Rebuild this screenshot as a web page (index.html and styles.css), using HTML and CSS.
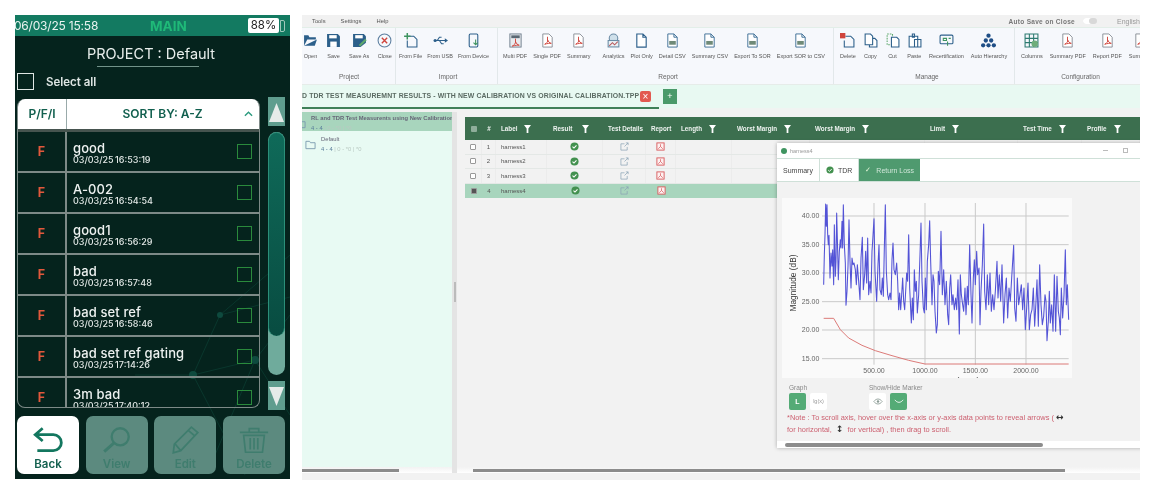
FILE: index.html
```html
<!DOCTYPE html>
<html lang="en">
<head>
    <meta charset="UTF-8">
    <title>Project results</title>
    <link rel="stylesheet" href="styles.css">
</head>
<body>
    <svg class="sprites" width="0" height="0">
        <symbol id="doc" viewBox="0 0 14 16"><path d="M2 1h6.500L12 4.500V15H2z M8.500 1v3.500H12" fill="#fff" stroke="#2c5f8a" stroke-width="1.200"/></symbol>
        <symbol id="pdf" viewBox="0 0 14 16"><path d="M2 1h6.500L12 4.500V15H2z" fill="#fff" stroke="#8a8f98"/><path d="M7 4v4M4 12c2-1 4-3 3-5 1 2 2 4 4 4-2 0-4 0-7 1z" fill="none" stroke="#d0443c"/></symbol>
        <symbol id="multi" viewBox="0 0 14 16"><rect x="1" y="1" width="12" height="14" fill="#e8ebef" stroke="#6f7f8e"/><rect x="2.500" y="2.500" width="9" height="3" fill="#5a6874"/><path d="M7 6v4M3.500 14c2-1 4-3 3.500-5 1 2 2 4 4 4-2 0-4 0-7.500 1z" fill="none" stroke="#d0443c"/></symbol>
        <symbol id="sheet" viewBox="0 0 14 16"><path d="M2 1h6.500L12 4.500V15H2z M8.500 1v3.500H12" fill="#fff" stroke="#3e6f96"/><rect x="3.500" y="8.500" width="7" height="4" fill="#6f8a78"/></symbol>
        <symbol id="filter" viewBox="0 0 8 9"><path d="M0 0h8L5 4v5H3V4z" fill="#fff"/></symbol>
        <symbol id="okay" viewBox="0 0 10 10"><circle cx="5" cy="5" r="4.500" fill="#43914f"/><path d="M2.800 5.200l1.600 1.500 2.800-3" fill="none" stroke="#fff" stroke-width="1.200"/></symbol>
        <symbol id="details" viewBox="0 0 10 10"><path d="M8 5.500V9H1V2h4M5 5l4-4M6.500 1H9v2.500" fill="none" stroke="#8aa3b5" stroke-width=".8"/></symbol>
        <symbol id="report" viewBox="0 0 10 10"><rect x="1" y="1" width="8" height="8" fill="#fdf0f0" stroke="#d8575a"/><path d="M5 2.500V5M2.500 7.500L5 5l2.500 2.500" fill="none" stroke="#d8575a" stroke-width=".8"/></symbol>
        <symbol id="folder" viewBox="0 0 12 10"><path d="M1 9V1h4l1 1.500h5V9z" fill="none" stroke="#7c9bb0"/></symbol>
    </svg>

    <!-- handheld tester -->
    <div class="phone">
        <svg class="phone-net" viewBox="0 0 275 464">
            <path d="M275 282L205 300 178 360 240 345 275 300M205 300L275 240M178 360L230 460M240 345L200 440M120 360L178 360M240 345L275 400" fill="none" stroke="#0c3f34" stroke-width=".7"/>
            <circle cx="205" cy="300" r="3" fill="#0e4a3e"/>
            <circle cx="178" cy="360" r="4" fill="#0e4a3e"/>
            <circle cx="240" cy="345" r="4" fill="#0e4a3e"/>
            <circle cx="263" cy="270" r="3" fill="#0e4a3e"/>
        </svg>
        <div class="status-bar">
            <span class="status-time">06/03/25 15:58</span>
            <span class="status-mode">MAIN</span>
            <span class="battery">88%</span>
            <span class="battery-nub"></span>
        </div>
        <h1 class="project-title">PROJECT : Default</h1>
        <div class="project-rule"></div>
        <label class="select-all"><span class="select-box"></span>Select all</label>

        <div class="list-area">
            <div class="list">
                <div class="list-head">
                    <div class="head-pfi">P/F/I</div>
                    <div class="head-sort">SORT BY: A-Z
                        <svg class="sort-caret" viewBox="0 0 10 6"><path d="M1 5l4-4 4 4" fill="none" stroke="#2a9a7e" stroke-width="1.500"/></svg>
                    </div>
                </div>
                <div class="list-row"><div class="row-flag">F</div><div class="row-main"><div class="row-name">good</div><div class="row-date">03/03/25 16:53:19</div></div><span class="row-check"></span></div>
                <div class="list-row"><div class="row-flag">F</div><div class="row-main"><div class="row-name">A-002</div><div class="row-date">03/03/25 16:54:54</div></div><span class="row-check"></span></div>
                <div class="list-row"><div class="row-flag">F</div><div class="row-main"><div class="row-name">good1</div><div class="row-date">03/03/25 16:56:29</div></div><span class="row-check"></span></div>
                <div class="list-row"><div class="row-flag">F</div><div class="row-main"><div class="row-name">bad</div><div class="row-date">03/03/25 16:57:48</div></div><span class="row-check"></span></div>
                <div class="list-row"><div class="row-flag">F</div><div class="row-main"><div class="row-name">bad set ref</div><div class="row-date">03/03/25 16:58:46</div></div><span class="row-check"></span></div>
                <div class="list-row"><div class="row-flag">F</div><div class="row-main"><div class="row-name">bad set ref gating</div><div class="row-date">03/03/25 17:14:26</div></div><span class="row-check"></span></div>
                <div class="list-row"><div class="row-flag">F</div><div class="row-main"><div class="row-name">3m bad</div><div class="row-date">03/03/25 17:40:12</div></div><span class="row-check"></span></div>
            </div>
            <div class="scroller">
                <div class="scroll-btn"><svg viewBox="0 0 17 24"><path d="M8.500 3L16 22H1z" fill="#e6ebe9"/></svg></div>
                <div class="scroll-track"><div class="scroll-thumb"></div></div>
                <div class="scroll-btn"><svg viewBox="0 0 17 24"><path d="M8.500 22L16 3H1z" fill="#e6ebe9"/></svg></div>
            </div>
        </div>

        <div class="actions">
            <div class="action action-on">
                <svg viewBox="0 0 30 26"><path d="M10 2L3 8l7 6M3 8h17a6.500 6.500 0 0 1 0 15H5" fill="none" stroke="#13775f" stroke-width="2.600"/></svg>
                <span>Back</span>
            </div>
            <div class="action">
                <svg viewBox="0 0 30 26"><circle cx="18" cy="10" r="8" fill="none" stroke="#3f7d6e" stroke-width="2.200"/><path d="M12 16L3 24" stroke="#3f7d6e" stroke-width="2.800"/></svg>
                <span>View</span>
            </div>
            <div class="action">
                <svg viewBox="0 0 30 26"><path d="M21 1l6 5L11 23l-7 2 1-8zM6 17l5 6M18 4l6 5" fill="none" stroke="#3f7d6e" stroke-width="1.600"/></svg>
                <span>Edit</span>
            </div>
            <div class="action">
                <svg viewBox="0 0 34 28"><path d="M2 6h30M12 6V2h10v4M6 9h22l-2 18H8zM13 12v12M17 12v12M21 12v12" fill="none" stroke="#3f7d6e" stroke-width="1.800"/></svg>
                <span>Delete</span>
            </div>
        </div>
    </div>

    <!-- desktop application -->
    <div class="desktop">
        <div class="menu-bar">
            <span class="menu-item">Tools</span>
            <span class="menu-item">Settings</span>
            <span class="menu-item">Help</span>
            <span class="autosave">Auto Save on Close</span>
            <span class="toggle"></span>
            <span class="language">English</span>
        </div>

        <div class="ribbon">
            <div class="rib-group rib-project">
                <div class="rib-tools">
                    <div class="tool"><svg viewBox="0 0 14 14"><path d="M1 12V2h4l1 2h6v2H4l-3 6h10l2-6" fill="#2c5f8a"/></svg><span>Open</span></div>
                    <div class="tool"><svg viewBox="0 0 14 14"><path d="M1 1h10l2 2v10H1z" fill="#2c5f8a"/><rect x="3" y="2" width="7" height="3" fill="#fff"/><rect x="4" y="8" width="6" height="5" fill="#fff"/></svg><span>Save</span></div>
                    <div class="tool"><svg viewBox="0 0 14 14"><path d="M1 1h10l2 2v6l-5 4H1z" fill="#2c5f8a"/><rect x="3" y="2" width="7" height="3" fill="#fff"/><path d="M7 12l6-6" stroke="#5ea86c" stroke-width="2"/></svg><span>Save As</span></div>
                    <div class="tool"><svg viewBox="0 0 14 14"><circle cx="7" cy="7" r="6" fill="none" stroke="#5d7fa0"/><path d="M4.500 4.500l5 5M9.500 4.500l-5 5" stroke="#d0443c" stroke-width="1.300"/></svg><span>Close</span></div>
                </div>
                <div class="rib-title">Project</div>
            </div>
            <div class="rib-group rib-import">
                <div class="rib-tools">
                    <div class="tool"><svg viewBox="0 0 14 14"><path d="M5 3h5l3 3v7H4V7" fill="none" stroke="#2c5f8a"/><path d="M4 0v6M1 3h6" stroke="#3f9460" stroke-width="1.400"/></svg><span>From File</span></div>
                    <div class="tool"><svg viewBox="0 0 14 14"><path d="M1 7h11M4 7l2-3h2M6 7l2 3h2" fill="none" stroke="#2c5f8a"/><circle cx="2" cy="7" r="1.500" fill="#2c5f8a"/><path d="M11 5l3 2-3 2z" fill="#2c5f8a"/></svg><span>From USB</span></div>
                    <div class="tool"><svg viewBox="0 0 14 14"><rect x="3" y="1" width="8" height="12" rx="1" fill="none" stroke="#2c5f8a"/><path d="M9 6v5M7 9l2 2 2-2" fill="none" stroke="#3f9460"/></svg><span>From Device</span></div>
                </div>
                <div class="rib-title">Import</div>
            </div>
            <div class="rib-group rib-report">
                <div class="rib-tools">
                    <div class="tool"><svg><use href="#multi"/></svg><span>Multi PDF</span></div>
                    <div class="tool"><svg><use href="#pdf"/></svg><span>Single PDF</span></div>
                    <div class="tool tool-wide"><svg><use href="#pdf"/></svg><span>Summary</span></div>
                    <div class="tool"><svg viewBox="0 0 14 14"><circle cx="7" cy="5" r="4" fill="#cfe0ea" stroke="#6a8ba5"/><rect x="2" y="7" width="10" height="6" fill="#e9f1f5" stroke="#6a8ba5"/><path d="M3 12l3-3 2 2 3-3" fill="none" stroke="#b8595c"/></svg><span>Analytics</span></div>
                    <div class="tool"><svg><use href="#doc"/></svg><span>Plot Only</span></div>
                    <div class="tool"><svg><use href="#sheet"/></svg><span>Detail CSV</span></div>
                    <div class="tool"><svg><use href="#sheet"/></svg><span>Summary CSV</span></div>
                    <div class="tool"><svg><use href="#sheet"/></svg><span>Export To SOR</span></div>
                    <div class="tool"><svg><use href="#sheet"/></svg><span>Export SOR to CSV</span></div>
                </div>
                <div class="rib-title">Report</div>
            </div>
            <div class="rib-group rib-manage">
                <div class="rib-tools">
                    <div class="tool"><svg viewBox="0 0 14 14"><path d="M5 3h5l3 3v7H4V7" fill="none" stroke="#2c5f8a"/><rect x="0" y="0" width="5" height="5" fill="#d0443c"/></svg><span>Delete</span></div>
                    <div class="tool"><svg viewBox="0 0 14 14"><path d="M2 1h5l2 2v8H2z M9 5h2l2 2v6H6v-2" fill="#fff" stroke="#2c5f8a"/></svg><span>Copy</span></div>
                    <div class="tool"><svg viewBox="0 0 14 14"><path d="M2 1h5v10H2z" fill="none" stroke="#5ea86c" stroke-dasharray="1.500 1"/><path d="M6 4h5l2 2v7H6z" fill="#fff" stroke="#2c5f8a"/></svg><span>Cut</span></div>
                    <div class="tool"><svg viewBox="0 0 14 14"><path d="M2 3h8v10H2z M5 1h2v3H5z M7 6h6v7H7z" fill="#fff" stroke="#2c5f8a"/></svg><span>Paste</span></div>
                    <div class="tool"><svg viewBox="0 0 14 14"><rect x="1" y="2" width="12" height="8" rx="1" fill="none" stroke="#2c5f8a"/><path d="M4 5h3v2H4zM9 5h2M8 8v4" fill="none" stroke="#3f9460"/></svg><span>Recertification</span></div>
                    <div class="tool"><svg viewBox="0 0 14 14" fill="#1f4e86"><circle cx="7" cy="2.500" r="2"/><circle cx="4.500" cy="7" r="2"/><circle cx="9.500" cy="7" r="2"/><circle cx="2" cy="11.500" r="2"/><circle cx="7" cy="11.500" r="2"/><circle cx="12" cy="11.500" r="2"/></svg><span>Auto Hierarchy</span></div>
                </div>
                <div class="rib-title">Manage</div>
            </div>
            <div class="rib-group rib-config">
                <div class="rib-tools">
                    <div class="tool"><svg viewBox="0 0 14 14"><path d="M1 1h12v12H1zM1 5h12M1 9h12M5 1v12M9 1v12" fill="none" stroke="#2c7a70"/><circle cx="10" cy="10" r="3" fill="#6fae7b"/></svg><span>Columns</span></div>
                    <div class="tool"><svg><use href="#pdf"/></svg><span>Summary PDF</span></div>
                    <div class="tool"><svg><use href="#pdf"/></svg><span>Report PDF</span></div>
                    <div class="tool"><svg><use href="#pdf"/></svg><span>Summary</span></div>
                </div>
                <div class="rib-title">Configuration</div>
            </div>
        </div>

        <div class="file-tabs">
            <div class="file-tab">D TDR TEST MEASUREMNT RESULTS - WITH NEW CALIBRATION VS ORIGINAL CALIBRATION.TPP</div>
            <span class="tab-close">×</span>
            <span class="tab-add">+</span>
        </div>

        <div class="workspace">
            <div class="tree-pane">
                <div class="tree">
                    <div class="tree-item tree-item-on">
                        <svg><use href="#folder"/></svg>
                        <div class="tree-text">
                            <div class="tree-name">RL and TDR Test Measurents using New Calibration</div>
                            <div class="tree-count">4 - 4 <i>| 0 - *0 | *0</i></div>
                        </div>
                    </div>
                    <div class="tree-item">
                        <svg><use href="#folder"/></svg>
                        <div class="tree-text">
                            <div class="tree-name">Default</div>
                            <div class="tree-count">4 - 4 <i>| 0 - *0 | *0</i></div>
                        </div>
                    </div>
                </div>
                <div class="hscroll"><div class="hscroll-thumb tree-thumb"></div></div>
            </div>
            <div class="splitter"><span></span></div>
            <div class="results">
                <div class="table">
                    <div class="table-head">
                        <div class="cell cell-mid"><b class="minus-box"></b></div>
                        <div class="cell cell-mid">#</div>
                        <div class="cell">Label <svg><use href="#filter"/></svg></div>
                        <div class="cell cell-result">Result <svg><use href="#filter"/></svg></div>
                        <div class="cell">Test Details</div>
                        <div class="cell">Report</div>
                        <div class="cell">Length <svg><use href="#filter"/></svg></div>
                        <div class="cell">Worst Margin <svg><use href="#filter"/></svg></div>
                        <div class="cell">Worst Margin <svg><use href="#filter"/></svg></div>
                        <div class="cell">Limit <svg><use href="#filter"/></svg></div>
                        <div class="cell">Test Time <svg><use href="#filter"/></svg></div>
                        <div class="cell">Profile <svg><use href="#filter"/></svg></div>
                    </div>
                    <div class="table-row">
                        <div class="cell cell-mid"><b class="tick-box"></b></div><div class="cell cell-mid">1</div><div class="cell">harness1</div>
                        <div class="cell cell-mid"><svg class="row-icon"><use href="#okay"/></svg></div><div class="cell cell-mid"><svg class="row-icon"><use href="#details"/></svg></div><div class="cell cell-mid"><svg class="row-icon"><use href="#report"/></svg></div>
                        <div class="cell"></div><div class="cell"></div><div class="cell"></div><div class="cell"></div><div class="cell"></div><div class="cell"></div>
                    </div>
                    <div class="table-row">
                        <div class="cell cell-mid"><b class="tick-box"></b></div><div class="cell cell-mid">2</div><div class="cell">harness2</div>
                        <div class="cell cell-mid"><svg class="row-icon"><use href="#okay"/></svg></div><div class="cell cell-mid"><svg class="row-icon"><use href="#details"/></svg></div><div class="cell cell-mid"><svg class="row-icon"><use href="#report"/></svg></div>
                        <div class="cell"></div><div class="cell"></div><div class="cell"></div><div class="cell"></div><div class="cell"></div><div class="cell"></div>
                    </div>
                    <div class="table-row">
                        <div class="cell cell-mid"><b class="tick-box"></b></div><div class="cell cell-mid">3</div><div class="cell">harness3</div>
                        <div class="cell cell-mid"><svg class="row-icon"><use href="#okay"/></svg></div><div class="cell cell-mid"><svg class="row-icon"><use href="#details"/></svg></div><div class="cell cell-mid"><svg class="row-icon"><use href="#report"/></svg></div>
                        <div class="cell"></div><div class="cell"></div><div class="cell"></div><div class="cell"></div><div class="cell"></div><div class="cell"></div>
                    </div>
                    <div class="table-row table-row-on">
                        <div class="cell cell-mid"><b class="tick-box tick-box-on"></b></div><div class="cell cell-mid">4</div><div class="cell">harness4</div>
                        <div class="cell cell-mid"><svg class="row-icon"><use href="#okay"/></svg></div><div class="cell cell-mid"><svg class="row-icon"><use href="#details"/></svg></div><div class="cell cell-mid"><svg class="row-icon"><use href="#report"/></svg></div>
                        <div class="cell"></div><div class="cell"></div><div class="cell"></div><div class="cell"></div><div class="cell"></div><div class="cell"></div>
                    </div>
                </div>
                <div class="results-space"></div>
                <div class="hscroll"><div class="hscroll-thumb results-thumb"></div></div>
            </div>
        </div>
        <div class="bottom-strip"></div>

        <!-- harness window, floats over the table -->
        <div class="harness-win">
            <div class="win-title">
                <span class="win-dot"></span>
                <span class="win-name">harness4</span>
                <span class="win-min"></span>
                <span class="win-max"></span>
            </div>
            <div class="win-tabs">
                <div class="win-tab">Summary</div>
                <div class="win-tab"><svg><use href="#okay"/></svg>TDR</div>
                <div class="win-tab win-tab-on">✓ <em>Return Loss</em></div>
            </div>
            <div class="win-body">
                <svg class="chart" viewBox="20 10 870 540">
                    <g class="grid">
                        <path d="M140 64H880M140 150H880M140 235H880M140 321H880M140 406H880M140 492H880"/>
                        <path d="M296 25V510M449 25V510M600 25V510M752 25V510"/>
                    </g>
                    <g class="y-ticks">
                        <text x="132" y="71">40.00</text>
                        <text x="132" y="157">35.00</text>
                        <text x="132" y="242">30.00</text>
                        <text x="132" y="328">25.00</text>
                        <text x="132" y="413">20.00</text>
                        <text x="132" y="499">15.00</text>
                    </g>
                    <g class="x-ticks">
                        <text x="296" y="535">500.00</text>
                        <text x="449" y="535">1000.00</text>
                        <text x="600" y="535">1500.00</text>
                        <text x="752" y="535">2000.00</text>
                        <text class="axis-title" x="515" y="568">Frequency (MHz)</text>
                    </g>
                    <text class="axis-title" transform="translate(62 265) rotate(-90)">Magnitude (dB)</text>
                    <polyline class="trace" points="145,270 147,180 149,120 151,28 153,95 155,30 157,118 159,150 161,122 164,250 167,175 170,215 172,165 175,270 177,90 180,245 182,200 184,55 186,130 189,255 192,170 195,135 197,160 200,80 202,160 204,30 207,150 210,205 212,332 215,290 218,215 221,75 224,200 227,280 230,190 233,210 236,205 240,225 243,270 246,210 250,260 254,315 257,190 261,128 264,285 268,240 271,170 274,265 277,130 280,300 284,260 287,295 290,170 292,140 296,72 299,230 304,320 308,210 311,150 314,285 318,300 321,250 324,305 327,160 330,30 333,230 337,300 340,315 344,295 347,315 350,195 353,145 356,225 360,240 364,205 367,260 370,345 373,295 376,345 379,300 382,250 385,320 388,345 391,290 394,235 397,260 400,120 403,280 408,385 411,310 414,375 417,225 420,290 423,260 426,355 430,300 434,180 437,85 440,260 444,340 447,355 450,250 453,345 456,200 460,150 463,78 466,200 470,330 473,240 476,260 479,350 483,415 486,390 489,230 493,270 497,110 501,300 505,225 509,330 513,260 517,360 520,390 523,280 526,240 530,330 533,300 537,345 541,310 544,345 548,255 552,418 555,240 558,300 562,330 565,350 569,280 572,360 576,275 579,330 583,150 587,300 590,385 594,250 597,195 600,270 604,170 607,240 611,220 614,390 617,290 621,210 625,88 628,290 632,345 636,240 640,330 644,235 648,350 652,300 656,345 660,290 665,200 668,310 672,240 676,320 680,210 685,385 689,300 693,250 697,370 701,280 705,320 709,250 715,152 718,340 722,380 726,250 730,330 734,300 738,270 742,345 746,280 750,405 754,340 758,265 762,405 766,360 770,345 774,280 778,395 782,320 785,255 789,395 793,210 797,330 801,390 805,365 809,300 812,320 815,438 819,380 822,290 825,385 829,330 833,410 837,240 841,410 845,245 849,350 852,370 855,420 858,280 862,370 866,300 870,165 873,330 876,270 880,375"/>
                    <polyline class="limit" points="145,371 175,371 195,405 220,430 260,452 300,468 350,483 400,497 449,508 880,508"/>
                </svg>
                <div class="chart-controls">
                    <div class="control-group">
                        <div class="control-label">Graph</div>
                        <div class="control-btns"><span class="ctl ctl-on">L</span><span class="ctl">lg(x)</span></div>
                    </div>
                    <div class="control-group">
                        <div class="control-label">Show/Hide Marker</div>
                        <div class="control-btns">
                            <span class="ctl"><svg viewBox="0 0 12 8"><path d="M1 4c3-4 7-4 10 0-3 4-7 4-10 0z" fill="none" stroke="#8a9a94"/><circle cx="6" cy="4" r="1.500" fill="#8a9a94"/></svg></span>
                            <span class="ctl ctl-on"><svg viewBox="0 0 12 8"><path d="M1 2c3 4 7 4 10 0" fill="none" stroke="#fff"/></svg></span>
                        </div>
                    </div>
                </div>
                <p class="chart-note">*Note : To scroll axis, hover over the x-axis or y-axis data points to reveal arrows ( <b>↔</b><br>for horizontal, &nbsp;<b>↕</b>&nbsp; for vertical) , then drag to scroll.</p>
            </div>
            <div class="win-scroll"><div class="win-scroll-thumb"></div></div>
        </div>
    </div>
</body>
</html>
```

FILE: styles.css
```css
* {
    box-sizing: border-box;
}

body {
    margin: 0;
    padding: 15px;
    height: 497px;
    overflow: hidden;
    display: flex;
    gap: 12px;
    background: white;
    font-family: "Liberation Sans", sans-serif;
}

.sprites {
    display: none;
}

/* handheld */
.phone {
    position: relative;
    flex: none;
    width: 275px;
    height: 464px;
    display: flex;
    flex-direction: column;
    padding: 0 5px 0 2px;
    background: #05231d;
    color: white;
    font-family: Inter, sans-serif;
    overflow: hidden;
    filter: blur(.3px);
}

.phone-net {
    position: absolute;
    left: 0;
    top: 0;
    width: 275px;
    height: 464px;
}

.phone > div,
.phone > h1,
.phone > label {
    position: relative;
}

.status-bar {
    height: 21px;
    margin: 0 -5px 0 -2px;
    display: flex;
    align-items: center;
    background: #137a61;
    font-size: 12px;
    color: #e9f3f0;
}

.status-time {
    width: 112px;
    white-space: nowrap;
    margin-left: -1px;
    letter-spacing: -.2px;
}

.status-mode {
    width: 122px;
    padding-left: 24px;
    font-weight: 700;
    font-size: 13.500px;
    color: #1fb978;
}

.battery {
    width: 31px;
    height: 15px;
    background: white;
    border-radius: 2px;
    color: #222;
    font-size: 11.500px;
    line-height: 15px;
    text-align: center;
}

.battery-nub {
    width: 5px;
    height: 12px;
    margin-left: 1px;
    border: 1px solid #9fc9bc;
    border-radius: 0 2px 2px 0;
}

.project-title {
    margin: 8px 0 0;
    font-size: 14.500px;
    line-height: 20px;
    font-weight: 400;
    text-align: center;
    color: #e8eeec;
}

.project-rule {
    width: 102px;
    height: 1px;
    margin: 2px auto 0;
    transform: translateX(-3px);
    background: #72938a;
}

.select-all {
    display: flex;
    align-items: center;
    gap: 12px;
    margin-top: 6px;
    height: 17px;
    font-size: 11.500px;
    font-weight: 600;
    color: #dfe6e4;
}

.select-box {
    width: 17px;
    height: 17px;
    border: 1px solid #dfe6e4;
}

.list-area {
    display: flex;
    gap: 8px;
    height: 313px;
    margin-top: 7px;
}

.list {
    width: 243px;
    height: 309px;
    margin-top: 2px;
    border: 1px solid #7d8a87;
    border-top: none;
    border-radius: 8px;
    overflow: hidden;
}

.list-head {
    display: flex;
    height: 33px;
    background: white;
    color: #12604f;
    font-size: 12px;
    font-weight: 600;
    border-bottom: 3px solid #46544f;
}

.head-pfi {
    width: 49px;
    line-height: 29px;
    text-align: center;
    border-right: 1px solid #9aa;
}

.head-sort {
    position: relative;
    flex: 1;
    line-height: 29px;
    text-align: center;
    padding-right: 1px;
}

.sort-caret {
    position: absolute;
    right: 6px;
    top: 12px;
    width: 9px;
    height: 6px;
}

.list-row {
    display: flex;
    align-items: center;
    height: 41px;
    border-bottom: 2px solid #7d8a87;
    flex: none;
}

.row-flag {
    width: 49px;
    height: 41px;
    margin-bottom: -2px;
    line-height: 39px;
    text-align: center;
    color: #e2583c;
    font-size: 12.500px;
    font-weight: 700;
    border-right: 2px solid #7d8a87;
}

.row-main {
    flex: 1;
    padding: 2px 0 0 6px;
}

.row-name {
    font-size: 13px;
    line-height: 13px;
    font-weight: 500;
    letter-spacing: .1px;
    color: #eef2f1;
}

.row-date {
    font-size: 9px;
    line-height: 9px;
    font-weight: 500;
    color: #e2e8e6;
    word-spacing: -1px;
}

.row-check {
    width: 15px;
    height: 15px;
    margin-right: 7px;
    border: 1px solid #2a8a3c;
}

.scroller {
    width: 17px;
    display: flex;
    flex-direction: column;
    gap: 6px;
}

.scroll-btn {
    height: 29px;
    background: #5f9d8e;
    display: flex;
    align-items: center;
}

.scroll-btn svg {
    width: 17px;
    height: 24px;
}

.scroll-track {
    flex: 1;
    border-radius: 9px;
    background: #6fab9c;
    overflow: hidden;
}

.scroll-thumb {
    height: 204px;
    border-radius: 9px;
    border: 1px solid #2b8f79;
    border-bottom: none;
    background: linear-gradient(180deg, #0f6a59, #084c41);
}

.actions {
    display: flex;
    justify-content: space-between;
    margin-top: 6px;
}

.action {
    width: 62px;
    height: 58px;
    border-radius: 7px;
    background: #5c8a7f;
    color: #3f7d6e;
    display: flex;
    flex-direction: column;
    align-items: center;
    font-size: 11.500px;
    font-weight: 600;
}

.action svg {
    width: 32px;
    height: 28px;
    margin-top: 10px;
    margin-bottom: 3px;
}

.action-on {
    background: white;
    color: #13604f;
}

/* desktop application */
.desktop {
    position: relative;
    flex: none;
    width: 838px;
    height: 465px;
    display: flex;
    flex-direction: column;
    background: #f2f2f2;
    overflow: hidden;
    color: #555;
    filter: blur(.35px);
}

.menu-bar {
    display: flex;
    align-items: center;
    height: 13px;
    padding-left: 10px;
    font-size: 5.800px;
    background: #f1f1f1;
    border-bottom: 1px solid #e2eee8;
}

.menu-item {
    margin-right: 15px;
}

.autosave {
    margin-left: auto;
    font-size: 6.500px;
    font-weight: 700;
    letter-spacing: .3px;
    color: #777;
}

.toggle {
    width: 14px;
    height: 6px;
    margin: 0 20px 0 8px;
    border-radius: 3px;
    background: #d8d8d8;
    box-shadow: inset 6px 0 0 white;
}

.language {
    width: 23px;
    font-size: 7px;
    color: #999;
    white-space: nowrap;
}

.ribbon {
    display: flex;
    height: 57px;
    background: #f6f8fc;
    border-bottom: 1px solid #e6ece9;
}

.rib-group {
    flex: none;
    display: flex;
    flex-direction: column;
    border-right: 1px solid #e2e8ea;
    overflow: hidden;
}

.rib-project { width: 94px; padding-left: 1px; }
.rib-import { width: 102px; padding-left: 3px; }
.rib-report { width: 336px; padding-left: 5px; }
.rib-manage { width: 181px; padding-left: 6px; }
.rib-config { width: 125px; padding-left: 6px; border-right: none; }

.rib-tools {
    flex: 1;
    display: flex;
    gap: 6px;
    padding-top: 5px;
}

.rib-project .rib-tools { gap: 8px; }
.rib-import .rib-tools { gap: 5px; }
.rib-manage .rib-tools,
.rib-config .rib-tools { gap: 7px; }

.tool {
    flex: none;
    display: flex;
    flex-direction: column;
    align-items: center;
    gap: 4px;
    font-size: 5.500px;
    line-height: 8px;
    white-space: nowrap;
}

.tool svg {
    width: 15px;
    height: 15px;
}

.tool-wide {
    margin-right: 6px;
}

.rib-title {
    height: 15px;
    line-height: 15px;
    text-align: center;
    font-size: 6.500px;
    color: #666;
}

.file-tabs {
    display: flex;
    align-items: center;
    height: 25px;
    background: #e8f9f2;
    border-bottom: 2px solid #f0f4f2;
}

.file-tab {
    width: 357px;
    height: 25px;
    padding-top: 8px;
    flex: none;
    font-size: 6.900px;
    font-weight: 700;
    letter-spacing: .13px;
    white-space: nowrap;
    color: #5a6a62;
    border-bottom: 2px solid #3f8058;
    margin-right: -19px;
}

.tab-close {
    width: 11px;
    height: 11px;
    border-radius: 2px;
    background: #e25a50;
    color: white;
    font-size: 10px;
    line-height: 11px;
    text-align: center;
}

.tab-add {
    width: 14px;
    height: 15px;
    margin-left: 12px;
    background: #4a9a6a;
    color: white;
    font-size: 9px;
    line-height: 15px;
    text-align: center;
}

.workspace {
    flex: 1;
    min-height: 0;
    display: flex;
    padding-top: 2px;
}

.tree-pane {
    width: 150px;
    display: flex;
    flex-direction: column;
}

.tree {
    flex: 1;
    background: #e8faf3;
}

.tree-item {
    display: flex;
    gap: 5px;
    height: 19px;
    padding: 3px 0 0 3px;
    margin-bottom: 2px;
    font-size: 5.800px;
    white-space: nowrap;
    overflow: hidden;
}

.tree-item-on {
    background: #a8d5bd;
    font-weight: 700;
}

.tree-item svg {
    flex: none;
    width: 11px;
    height: 10px;
    margin-top: 4px;
}

.tree-item-on svg {
    margin-left: -10px;
}

.tree-name {
    line-height: 7px;
    color: #667;
}

.tree-count {
    margin-top: 3px;
    line-height: 7px;
    color: #5b7f9c;
    font-weight: 400;
}

.tree-count i {
    font-style: normal;
    color: #b9c9c2;
}

.splitter {
    position: relative;
    width: 5px;
    background: #e4e4e4;
}

.splitter span {
    position: absolute;
    left: 1.500px;
    top: 170px;
    width: 2px;
    height: 20px;
    background: #bbb;
}

.results {
    flex: 1;
    min-width: 0;
    display: flex;
    flex-direction: column;
    padding-top: 5px;
}

.table {
    margin-left: 8px;
    font-size: 6px;
}

.table-head,
.table-row {
    display: grid;
    grid-template-columns: 17px 14px 51px 56px 43px 30px 56px 78px 115px 93px 64px 58px;
}

.table-head {
    height: 23px;
    background: #3c6f4f;
    color: #eef3f0;
    font-weight: 700;
    font-size: 6.300px;
}

.table-row {
    height: 14.500px;
    color: #555;
    border-bottom: 1px solid #e4e8e6;
}

.table-row-on {
    background: #a8d5bd;
    border-bottom: none;
}

.cell {
    display: flex;
    align-items: center;
    gap: 7px;
    padding-left: 5px;
    white-space: nowrap;
    border-right: 1px solid #ececec;
}

.table-head .cell,
.table-row-on .cell {
    border-right: none;
}

.table-head svg {
    width: 7px;
    height: 8px;
}

.cell-mid {
    justify-content: center;
    padding-left: 0;
}

.cell-result {
    padding-left: 6px;
    gap: 10px;
}

.minus-box {
    width: 6px;
    height: 6px;
    background: #8fae9b;
    border-radius: 1px;
}

.tick-box {
    width: 6px;
    height: 6px;
    border: 1px solid #999;
    border-radius: 1px;
    background: white;
}

.tick-box-on {
    background: #555;
}

.row-icon {
    width: 9px;
    height: 9px;
}

.results-space {
    flex: 1;
}

.hscroll {
    flex: none;
    height: 6px;
    padding-top: 2px;
    background: linear-gradient(#f2f2f2, white);
}

.hscroll-thumb {
    height: 3px;
    background: #8c8c8c;
}

.tree-thumb {
    width: 97px;
}

.results-thumb {
    width: 592px;
    margin-left: 16px;
}

.bottom-strip {
    height: 7px;
    background: #f2f2f2;
}

/* harness window */
.harness-win {
    position: absolute;
    left: 475px;
    top: 128px;
    width: 373px;
    height: 305px;
    display: flex;
    flex-direction: column;
    background: white;
    box-shadow: 0 0 4px rgba(0, 0, 0, .3);
}

.win-title {
    display: flex;
    align-items: center;
    height: 15px;
    padding-left: 4px;
    font-size: 5.500px;
    color: #999;
}

.win-dot {
    width: 6px;
    height: 6px;
    margin-right: 3px;
    border-radius: 50%;
    background: #3f9460;
}

.win-min {
    width: 5px;
    height: 1px;
    margin-left: 290px;
    background: #bbb;
}

.win-max {
    width: 5px;
    height: 5px;
    margin-left: 15px;
    border: 1px solid #bbb;
}

.win-tabs {
    display: flex;
    height: 24px;
    border-top: 1px solid #cfe0d8;
    border-bottom: 1px solid #cfe0d8;
    font-size: 7px;
    color: #444;
}

.win-tab {
    display: flex;
    align-items: center;
    gap: 4px;
    padding: 0 6px;
    border-right: 1px solid #cfe0d8;
}

.win-tab svg {
    width: 8px;
    height: 8px;
}

.win-tab-on {
    padding: 0 6px;
    gap: 5px;
    background: #4f9a6f;
    color: #e4f7d8;
    border-right: none;
}

.win-tab-on em {
    font-style: normal;
    color: #cfe6d8;
}

.win-body {
    flex: 1;
    min-height: 0;
    background: #f2f2f2;
    padding: 16px 0 0 5px;
}

.chart {
    display: block;
    width: 290px;
    height: 180px;
    background: #fafafa;
}

.grid path {
    fill: none;
    stroke: #c9c9c9;
    stroke-width: 3;
}

.y-ticks text {
    font-size: 21px;
    text-anchor: end;
    fill: #666;
}

.x-ticks text {
    font-size: 21px;
    text-anchor: middle;
    fill: #666;
}

.axis-title,
.x-ticks .axis-title {
    font-size: 25px;
    text-anchor: middle;
    fill: #333;
}

.trace {
    fill: none;
    stroke: #5353d6;
    stroke-width: 3.200;
    stroke-linejoin: round;
}

.limit {
    fill: none;
    stroke: #d9716f;
    stroke-width: 2.800;
}

.chart-controls {
    display: flex;
    padding-left: 7px;
    margin-top: 6px;
}

.control-group {
    width: 80px;
}

.control-label {
    font-size: 6.500px;
    line-height: 7px;
    color: #888;
}

.control-btns {
    display: flex;
    gap: 4px;
    margin-top: 2px;
}

.ctl {
    width: 17px;
    height: 17px;
    border-radius: 2px;
    background: white;
    color: #999;
    font-size: 5.500px;
    line-height: 17px;
    text-align: center;
}

.ctl svg {
    width: 10px;
    height: 7px;
    margin-top: 5px;
    display: block;
    margin-left: 3.500px;
}

.ctl-on {
    background: #54ab76;
    color: white;
    font-size: 7px;
    font-weight: 700;
}

.chart-note {
    margin: 2px 0 0 5px;
    font-size: 7.400px;
    line-height: 12px;
    white-space: nowrap;
    color: #cc5f6f;
}

.chart-note b {
    font-family: "DejaVu Sans", sans-serif;
    font-size: 9px;
    line-height: 9px;
    color: #333;
}

.win-scroll {
    flex: none;
    height: 7px;
    padding-top: 2px;
    background: white;
}

.win-scroll-thumb {
    width: 258px;
    height: 4px;
    margin-left: 8px;
    border-radius: 2px;
    background: #8c8c8c;
}
```
